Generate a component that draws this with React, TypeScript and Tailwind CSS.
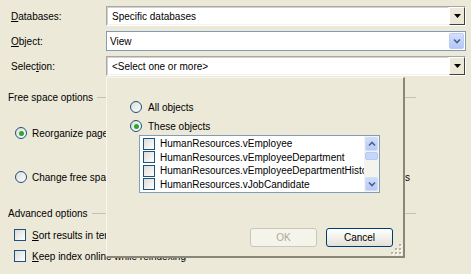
import React from 'react';

function Radio({ checked }: { checked?: boolean }) {
  return (
    <span className="w-[12px] h-[12px] shrink-0 rounded-full border border-[#1c5180] bg-linear-to-br from-[#dcdcd7] to-white flex items-center justify-center">
      {checked && (
        <span className="w-[5px] h-[5px] rounded-full bg-[#2aa82a]" />
      )}
    </span>
  );
}

function Check() {
  return (
    <span className="w-[12px] h-[12px] shrink-0 border border-[#1c5180] bg-linear-to-br from-[#dcdcd7] to-white" />
  );
}

// classic-looking combo (Databases / Selection rows)
function ClassicCombo({ value }: { value: string }) {
  return (
    <div className="w-[360px] h-[20px] flex border border-t-[#a7a6aa] border-l-[#a7a6aa] border-b-white border-r-white">
      <div className="flex-1 flex items-center bg-white pl-[4px] border border-t-[#d6d3c6] border-l-[#d6d3c6] border-b-[#f3f2ec] border-r-white">
        {value}
      </div>
      <div className="w-[16px] flex items-center justify-center bg-[#ece9d8] border border-t-white border-l-white border-b-[#404040] border-r-[#404040]">
        <svg width="7" height="4" viewBox="0 0 7 4">
          <path d="M0 0h7L3.5 4z" fill="#000" />
        </svg>
      </div>
    </div>
  );
}

function XpCombo({ value }: { value: string }) {
  return (
    <div className="w-[360px] h-[20px] flex items-stretch border border-[#7f9db9] bg-white p-[1px]">
      <div className="flex-1 flex items-center pl-[2px]">{value}</div>
      <div className="w-[15px] flex items-center justify-center rounded-[2px] border border-[#bccbf0] bg-linear-to-b from-[#d3e0fd] to-[#b2c7f6]">
        <svg width="8" height="6" viewBox="0 0 8 6">
          <path d="M1 1.5l3 3 3-3" fill="none" stroke="#4d6185" strokeWidth="1.6" />
        </svg>
      </div>
    </div>
  );
}

function ScrollBtn({ up }: { up?: boolean }) {
  return (
    <div className="h-[14px] mx-[1px] flex items-center justify-center rounded-[2px] border border-[#d2dcf7] bg-linear-to-b from-[#cfdcfc] to-[#b6cafa]">
      <svg width="8" height="6" viewBox="0 0 8 6">
        <path
          d={up ? 'M1 4.5l3-3 3 3' : 'M1 1.5l3 3 3-3'}
          fill="none"
          stroke="#4d6185"
          strokeWidth="1.6"
        />
      </svg>
    </div>
  );
}

const items = [
  'HumanResources.vEmployee',
  'HumanResources.vEmployeeDepartment',
  'HumanResources.vEmployeeDepartmentHistory',
  'HumanResources.vJobCandidate',
];

export default function App() {
  return (
    <div className="relative w-[474px] h-[276px] bg-white text-[10px] text-black font-['Liberation_Sans',Arial,sans-serif] overflow-hidden">
      <div className="w-[471px] h-[274px] bg-[#ece9d8] flex flex-col pt-[6px]">
        <div className="flex items-center h-[20px]">
          <span className="w-[106px] pl-[11px]">
            <span className="underline">D</span>atabases:
          </span>
          <ClassicCombo value="Specific databases" />
        </div>
        <div className="flex items-center h-[20px] mt-[5px]">
          <span className="w-[106px] pl-[11px]">
            <span className="underline">O</span>bject:
          </span>
          <XpCombo value="View" />
        </div>
        <div className="flex items-center h-[20px] mt-[5px]">
          <span className="w-[106px] pl-[11px]">
            Selec<span className="underline">t</span>ion:
          </span>
          <ClassicCombo value="<Select one or more>" />
        </div>

        <div className="flex items-center w-[416px] pl-[8px] mt-[15px] h-[12px]">
          <span>Free space options</span>
          <span className="flex-1 h-px bg-[#c5c2b2] ml-[4px]" />
        </div>
        <div className="flex items-center gap-[5px] pl-[15px] mt-[24px] h-[12px]">
          <Radio checked />
          <span>Reorganize pages</span>
        </div>
        <div className="flex items-center gap-[5px] pl-[15px] mt-[32px] h-[12px] w-[410px]">
          <Radio />
          <span>Change free space</span>
          <span className="ml-auto">s</span>
        </div>

        <div className="flex items-center w-[416px] pl-[8px] mt-[24px] h-[12px]">
          <span>Advanced options</span>
          <span className="flex-1 h-px bg-[#c5c2b2] ml-[4px]" />
        </div>
        <div className="flex items-center gap-[6px] pl-[14px] mt-[10px] h-[12px]">
          <Check />
          <span>
            <span className="underline">S</span>ort results in tempdb
          </span>
        </div>
        <div className="flex items-center gap-[6px] pl-[14px] mt-[9px] h-[12px]">
          <Check />
          <span>
            <span className="underline">K</span>eep index online while reindexing
          </span>
        </div>
      </div>

      {/* dropdown popup */}
      <div className="absolute left-[106px] top-[77px] w-[299px] h-[181px] bg-[#ece9d8] border-l border-t border-l-[#f7f6f1] border-t-[#f7f6f1] border-r-2 border-b-2 border-r-[#8a8778] border-b-[#8a8778] flex flex-col pl-[23px] pt-[22px]">
        <div className="flex items-center gap-[6px] h-[14px]">
          <Radio />
          <span>All objects</span>
        </div>
        <div className="flex items-center gap-[6px] h-[14px] mt-[5px]">
          <Radio checked />
          <span>These objects</span>
        </div>
        <div className="ml-[9px] mt-[2px] w-[241px] h-[58px] border border-[#7f9db9] bg-white flex">
          <div className="flex-1 overflow-hidden pt-[1px] pl-[3px]">
            {items.map((it) => (
              <div key={it} className="flex items-center gap-[5px] h-[13.5px] whitespace-nowrap">
                <Check />
                <span>{it}</span>
              </div>
            ))}
          </div>
          <div className="w-[15px] bg-[#f4f3ee] flex flex-col py-[1px]">
            <ScrollBtn up />
            <div className="h-[8px] mx-[1px] mt-[1px] rounded-[2px] border border-[#b8c9f3] bg-[#c6d5fb]" />
            <div className="flex-1" />
            <ScrollBtn />
          </div>
        </div>
        <div className="flex gap-[9px] ml-[120px] mt-[35px]">
          <div className="w-[67px] h-[19px] flex items-center justify-center rounded-[3px] border border-[#c9c7ba] bg-[#f5f4ea] text-[#aca899]">
            OK
          </div>
          <div className="w-[67px] h-[19px] flex items-center justify-center rounded-[3px] border border-[#003c74] bg-linear-to-b from-white to-[#e3e1d6]">
            Cancel
          </div>
        </div>
        <svg className="absolute right-[1px] bottom-[1px]" width="11" height="11" viewBox="0 0 11 11">
          {[
            [8, 0],
            [4, 4],
            [8, 4],
            [0, 8],
            [4, 8],
            [8, 8],
          ].map(([x, y]) => (
            <g key={`${x}-${y}`}>
              <rect x={x + 1} y={y + 1} width="2" height="2" fill="#fff" />
              <rect x={x} y={y} width="2" height="2" fill="#b5b2a3" />
            </g>
          ))}
        </svg>
      </div>
    </div>
  );
}
